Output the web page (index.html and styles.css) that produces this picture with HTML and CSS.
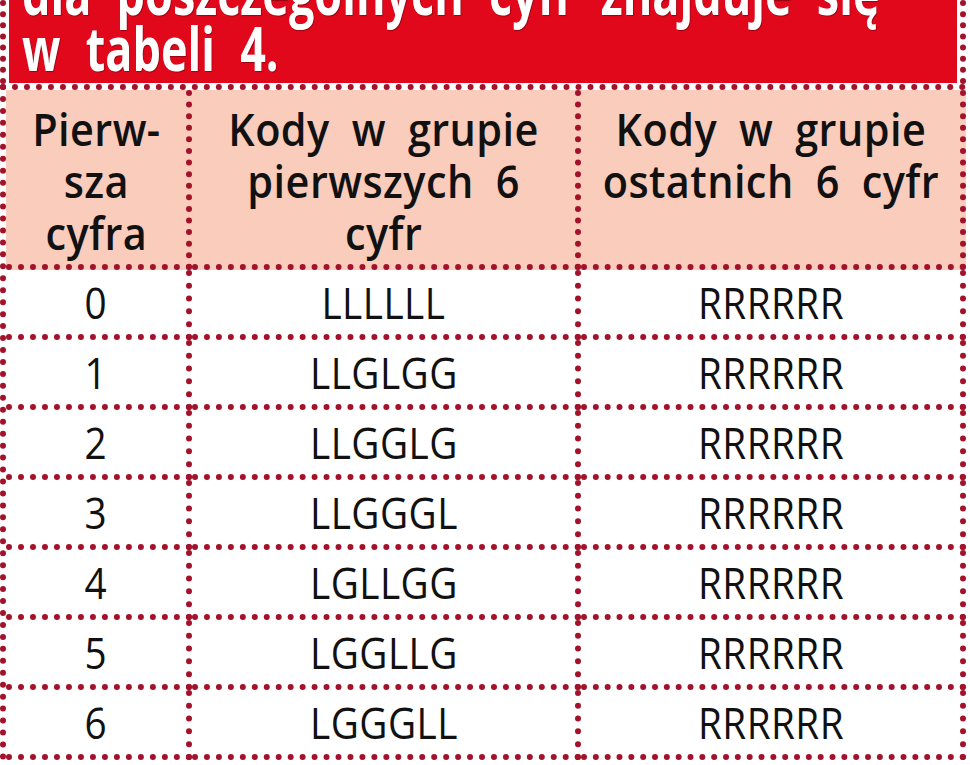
FILE: index.html
```html
<!DOCTYPE html>
<html lang="pl">
<head>
<meta charset="utf-8">
<title>Tabela 4</title>
<link rel="stylesheet" href="styles.css">
</head>
<body>
<div class="frame">
  <div class="banner">
    <div class="banner-inner">
      <p class="banner-text"><span class="nar">dla poszczególnych cyfr znajduje się</span><br><span class="nar">w tabeli 4.</span></p>
    </div>
  </div>
  <div class="grid" role="table">
    <div class="cell head" role="columnheader"><span class="nar">Pierw-<br>sza<br>cyfra</span></div>
    <div class="cell head" role="columnheader"><span class="nar">Kody w grupie<br>pierwszych 6<br>cyfr</span></div>
    <div class="cell head" role="columnheader"><span class="nar">Kody w grupie<br>ostatnich 6 cyfr</span></div>

    <div class="cell"><span class="nar">0</span></div><div class="cell"><span class="nar">LLLLLL</span></div><div class="cell"><span class="nar">RRRRRR</span></div>
    <div class="cell"><span class="nar">1</span></div><div class="cell"><span class="nar">LLGLGG</span></div><div class="cell"><span class="nar">RRRRRR</span></div>
    <div class="cell"><span class="nar">2</span></div><div class="cell"><span class="nar">LLGGLG</span></div><div class="cell"><span class="nar">RRRRRR</span></div>
    <div class="cell"><span class="nar">3</span></div><div class="cell"><span class="nar">LLGGGL</span></div><div class="cell"><span class="nar">RRRRRR</span></div>
    <div class="cell"><span class="nar">4</span></div><div class="cell"><span class="nar">LGLLGG</span></div><div class="cell"><span class="nar">RRRRRR</span></div>
    <div class="cell"><span class="nar">5</span></div><div class="cell"><span class="nar">LGGLLG</span></div><div class="cell"><span class="nar">RRRRRR</span></div>
    <div class="cell"><span class="nar">6</span></div><div class="cell"><span class="nar">LGGGLL</span></div><div class="cell"><span class="nar">RRRRRR</span></div>
  </div>
</div>
</body>
</html>
```
FILE: styles.css
```css
html, body {
  margin: 0;
  padding: 0;
  background: #ffffff;
}
body {
  width: 970px;
  height: 765px;
  overflow: hidden;
  font-family: "Open Sans", "Liberation Sans", sans-serif;
}
.frame {
  width: 966px;
}
.nar {
  display: inline-block;
  transform: scaleX(0.88);
}
.banner {
  height: 84px;
  border-left: 6px dotted #a3122b;
  border-right: 6px dotted #a3122b;
  padding: 0 3px;
  box-sizing: border-box;
}
.banner-inner {
  height: 83px;
  background: #e2081c;
  overflow: hidden;
  padding-left: 13px;
}
.banner-text {
  margin: -36px 0 0 0;
  color: #ffffff;
  font-weight: 700;
  font-size: 60px;
  line-height: 56px;
  word-spacing: 18px;
  white-space: nowrap;
  text-shadow: 1px 1px 1px rgba(60, 0, 0, 0.45);
}
.banner-text .nar {
  transform: scaleX(0.75);
  transform-origin: left center;
}
.grid {
  display: grid;
  grid-template-columns: 186px 389px 385px;
  grid-template-rows: 180px repeat(7, 70px);
  border-left: 6px dotted #a3122b;
  border-top: 6px dotted #a3122b;
}
.cell {
  box-sizing: border-box;
  border-right: 6px dotted #a3122b;
  border-bottom: 6px dotted #a3122b;
  display: flex;
  align-items: center;
  justify-content: center;
  text-align: center;
  color: #111111;
  font-size: 44px;
  letter-spacing: 0.5px;
  background: #ffffff;
}
.cell.head {
  align-items: flex-start;
  background: #f9ccbb;
  font-weight: 600;
  font-size: 46px;
  line-height: 52px;
  letter-spacing: 0.5px;
  padding-top: 12px;
  word-spacing: 12px;
}
.cell.head .nar {
  transform: scaleX(0.9);
}
```
